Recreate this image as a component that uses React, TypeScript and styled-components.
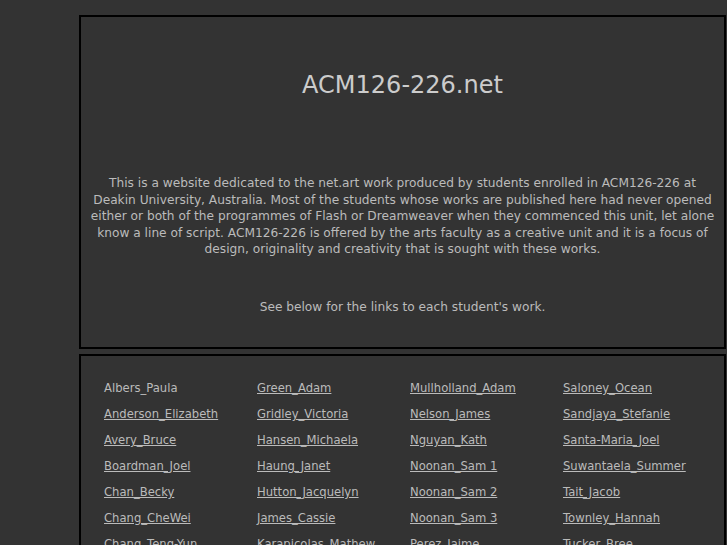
import React from "react";
import styled, { createGlobalStyle } from "styled-components";

const columns: { name: string; link: boolean }[][] = [
  [
    { name: "Albers_Paula", link: false },
    { name: "Anderson_Elizabeth", link: true },
    { name: "Avery_Bruce", link: true },
    { name: "Boardman_Joel", link: true },
    { name: "Chan_Becky", link: true },
    { name: "Chang_CheWei", link: true },
    { name: "Chang_Teng-Yun", link: false },
  ],
  [
    { name: "Green_Adam", link: true },
    { name: "Gridley_Victoria", link: true },
    { name: "Hansen_Michaela", link: true },
    { name: "Haung_Janet", link: true },
    { name: "Hutton_Jacquelyn", link: true },
    { name: "James_Cassie", link: true },
    { name: "Karapicolas_Mathew", link: false },
  ],
  [
    { name: "Mullholland_Adam", link: true },
    { name: "Nelson_James", link: true },
    { name: "Nguyan_Kath", link: true },
    { name: "Noonan_Sam 1", link: true },
    { name: "Noonan_Sam 2", link: true },
    { name: "Noonan_Sam 3", link: true },
    { name: "Perez_Jaime", link: false },
  ],
  [
    { name: "Saloney_Ocean", link: true },
    { name: "Sandjaya_Stefanie", link: true },
    { name: "Santa-Maria_Joel", link: true },
    { name: "Suwantaela_Summer", link: true },
    { name: "Tait_Jacob", link: true },
    { name: "Townley_Hannah", link: true },
    { name: "Tucker_Bree", link: false },
  ],
];

function App() {
  return (
    <>
      <GlobalStyle />
      <Page>
        <IntroBox>
          <Title>ACM126-226.net</Title>
          <Intro>
            This is a website dedicated to the net.art work produced by students
            enrolled in ACM126-226 at Deakin University, Australia. Most of the
            students whose works are published here had never opened either or
            both of the programmes of Flash or Dreamweaver when they commenced
            this unit, let alone know a line of script. ACM126-226 is offered by
            the arts faculty as a creative unit and it is a focus of design,
            originality and creativity that is sought with these works.
          </Intro>
          <Note>See below for the links to each student's work.</Note>
        </IntroBox>
        <ListBox>
          <Students>
            {columns.flat().map((s) =>
              s.link ? (
                <StudentLink key={s.name} href="#">
                  {s.name}
                </StudentLink>
              ) : (
                <StudentName key={s.name}>{s.name}</StudentName>
              )
            )}
          </Students>
        </ListBox>
      </Page>
    </>
  );
}

export default App;

const GlobalStyle = createGlobalStyle`
  html, body {
    margin: 0;
    background: #333333;
    color: #bbbbbb;
    font-family: "DejaVu Sans", Verdana, sans-serif;
  }
`;

const Page = styled.div`
  width: 647px;
  margin: 15px 0 0 79px;
  display: flex;
  flex-direction: column;
  gap: 5px;
`;

const Box = styled.div`
  border: 2px solid #000;
  background: #333333;
`;

const IntroBox = styled(Box)`
  padding: 54px 8px 32px;
  text-align: center;
`;

const Title = styled.h1`
  margin: 0;
  font-size: 24px;
  line-height: 28px;
  font-weight: normal;
  color: #cccccc;
`;

const Intro = styled.p`
  margin: 76px 0 0;
  font-size: 12.2px;
  line-height: 16.5px;
`;

const Note = styled.p`
  margin: 41px 0 0;
  font-size: 12.2px;
  line-height: 16.5px;
`;

const ListBox = styled(Box)`
  padding: 19px 0 20px 23px;
`;

const Students = styled.div`
  display: grid;
  grid-auto-flow: column;
  grid-template-rows: repeat(7, 26px);
  grid-template-columns: repeat(4, 153px);
  font-size: 11.6px;
  align-items: center;
`;

const StudentName = styled.span`
  color: #bbbbbb;
  white-space: nowrap;
`;

const StudentLink = styled.a`
  color: #bbbbbb;
  text-decoration: underline;
  white-space: nowrap;
`;
